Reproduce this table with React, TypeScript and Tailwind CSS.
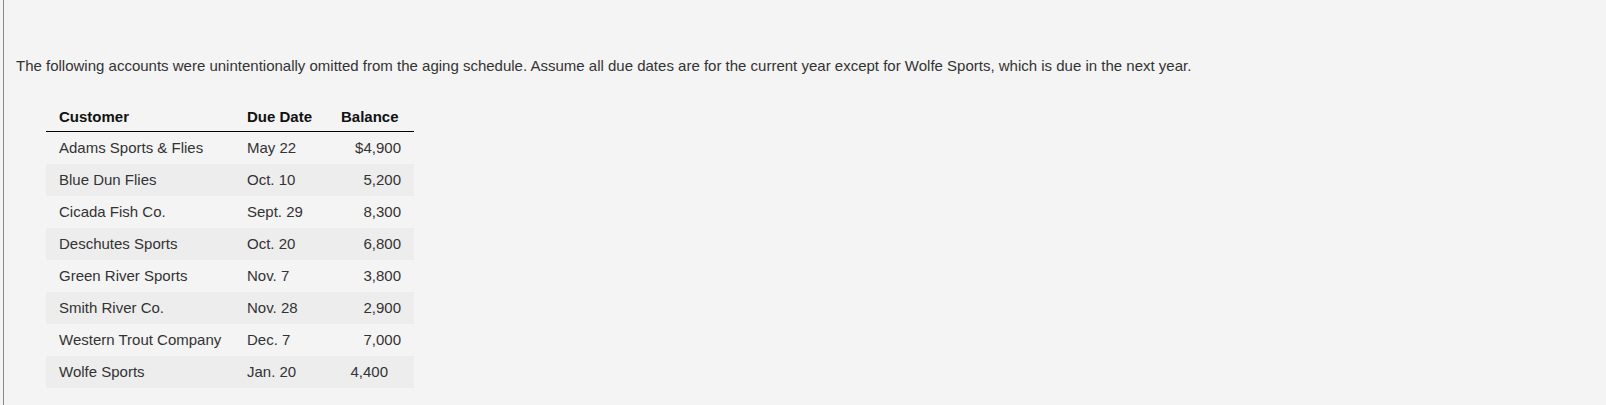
const rows = [
  { customer: 'Adams Sports & Flies', due: 'May 22', balance: '$4,900' },
  { customer: 'Blue Dun Flies', due: 'Oct. 10', balance: '5,200' },
  { customer: 'Cicada Fish Co.', due: 'Sept. 29', balance: '8,300' },
  { customer: 'Deschutes Sports', due: 'Oct. 20', balance: '6,800' },
  { customer: 'Green River Sports', due: 'Nov. 7', balance: '3,800' },
  { customer: 'Smith River Co.', due: 'Nov. 28', balance: '2,900' },
  { customer: 'Western Trout Company', due: 'Dec. 7', balance: '7,000' },
  { customer: 'Wolfe Sports', due: 'Jan. 20', balance: '4,400', offset: true },
];

export default function App() {
  return (
    <div className="h-[405px] w-[1606px] bg-[#f3f4f3] pl-[3px] font-['Liberation_Sans',Arial,sans-serif]">
      <div className="h-full border-l border-[#8c8c8c] pl-[12px] pt-[57px]">
        <p className="text-[15px] leading-[17px] text-[#333]">
          The following accounts were unintentionally omitted from the aging schedule. Assume all due dates are for the current year except for Wolfe Sports, which is due in the next year.
        </p>
        <table className="mt-[31px] ml-[30px] w-[368px] border-collapse text-[15px] leading-[17px]">
          <thead>
            <tr className="border-b border-black">
              <th className="w-[188px] pl-[13px] pt-[3px] pb-[6px] text-left font-bold text-[#111]">Customer</th>
              <th className="w-[94px] pl-[13px] pt-[3px] pb-[6px] text-left font-bold text-[#111]">Due Date</th>
              <th className="pl-[13px] pt-[3px] pb-[6px] text-left font-bold text-[#111]">Balance</th>
            </tr>
          </thead>
          <tbody>
            {rows.map((r, i) => (
              <tr key={r.customer} className={`h-[32px] ${i % 2 === 1 ? 'bg-[#ededed]' : ''}`}>
                <td className="pl-[13px] text-[#333]">{r.customer}</td>
                <td className="pl-[13px] text-[#333]">{r.due}</td>
                <td className={`text-right text-[#333] ${r.offset ? 'pr-[26px]' : 'pr-[13px]'}`}>{r.balance}</td>
              </tr>
            ))}
          </tbody>
        </table>
      </div>
    </div>
  );
}
